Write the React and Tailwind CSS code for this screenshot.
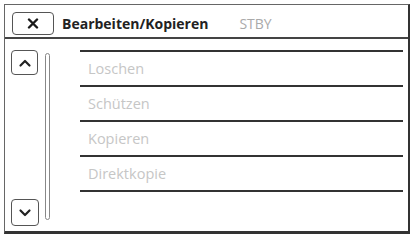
import React from 'react'

const items = ['Loschen', 'Schützen', 'Kopieren', 'Direktkopie']

function Chevron({ up }) {
  return (
    <svg width="14" height="10" viewBox="0 0 14 10" fill="none">
      <path
        d={up ? 'M2.5 7.5 L7 3 L11.5 7.5' : 'M2.5 2.5 L7 7 L11.5 2.5'}
        stroke="#222"
        strokeWidth="2.2"
        strokeLinecap="round"
        strokeLinejoin="round"
      />
    </svg>
  )
}

export default function App() {
  return (
    <div className="w-[412px] h-[237px] bg-white overflow-hidden pt-[4px] pl-[4px]" style={{ fontFamily: '"Open Sans", "Liberation Sans", sans-serif' }}>
      <div className="w-[406px] h-[230px] border-t border-l border-[#666] border-r-2 border-b-[3px] border-r-[#333] border-b-[#333] flex flex-col">
        {/* Header */}
        <div className="h-[34px] border-b-2 border-[#444] flex items-start pt-[7px] pl-[7px]">
          <div className="w-[42px] h-[23px] border border-[#555] rounded-[4px] flex items-center justify-center">
            <svg width="12" height="11" viewBox="0 0 12 11">
              <path d="M2 1.5 L10 9.5 M10 1.5 L2 9.5" stroke="#1a1a1a" strokeWidth="2.4" strokeLinecap="round" />
            </svg>
          </div>
          <div className="ml-[8px] h-[23px] flex items-center text-[14px] font-bold text-[#222]">
            Bearbeiten/Kopieren
          </div>
          <div className="ml-[31px] h-[23px] flex items-center text-[14px] text-[#aaa]">STBY</div>
        </div>

        {/* Body */}
        <div className="flex flex-1">
          <div className="ml-[6px] mt-[11px] mb-[5px] w-[28px] flex flex-col justify-between">
            <div className="w-[27px] h-[25px] border border-[#555] rounded-[4px] flex items-center justify-center">
              <Chevron up />
            </div>
            <div className="w-[28px] h-[27px] border border-[#555] rounded-[4px] flex items-center justify-center">
              <Chevron />
            </div>
          </div>
          <div className="ml-[6px] mt-[14px] w-[5px] h-[167px] border border-[#888] rounded-full" />
          <div className="ml-[30px] mt-[11px] w-[323px] flex flex-col">
            <div className="h-[2px] bg-[#333]" />
            {items.map(item => (
              <div key={item} className="h-[35px] border-b-2 border-[#333] flex items-center pl-[8px] text-[14.5px] text-[#c6c6c6]">
                {item}
              </div>
            ))}
          </div>
        </div>
      </div>
    </div>
  )
}
